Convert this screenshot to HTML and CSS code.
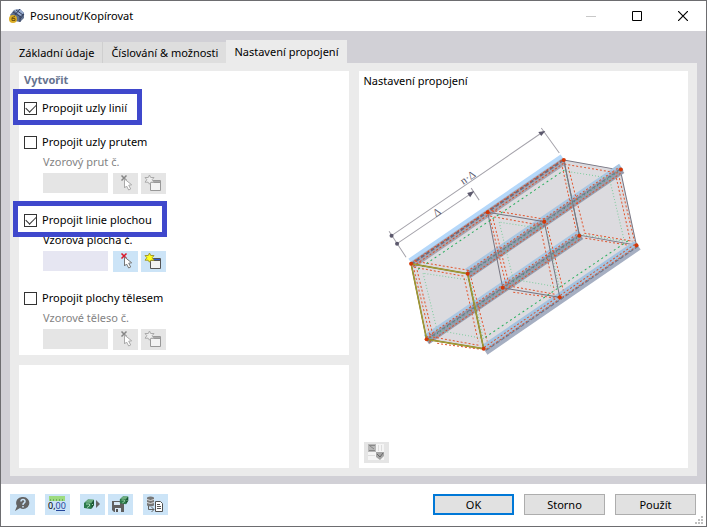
FILE: index.html
```html
<!DOCTYPE html>
<html lang="cs">
<head>
<meta charset="utf-8">
<title>Posunout/Kopírovat</title>
<link rel="stylesheet" href="styles.css">
</head>
<body>
<svg class="defs" aria-hidden="true">
  <defs>
    <symbol id="pick" viewBox="0 0 25 21">
      <path class="pick-x" d="M8.500 2.500l5 5M13.500 2.500l-5 5"/>
      <path class="pick-arrow" d="M11.500 6v9l2-2 2.200 4 2-1-2-3.800 3-.4z"/>
    </symbol>
    <symbol id="create" viewBox="0 0 25 21">
      <path class="win" d="M9.500 7.500h10v10h-10z"/>
      <path class="win-bar" d="M10 8h9v1h-9z"/>
      <path class="win-line" d="M9 9.500h11"/>
      <path class="star" d="M8.500 2l1.200 2.500H13l-1.800 2.200L13 9.200H9.900L8.500 11.200 7.100 9.200H4l1.800-2.500L4 4.500h3.300z"/>
    </symbol>
    <symbol id="block" viewBox="0 0 12 12">
      <path d="M1 5l4-3.500 6 .5v5l-3 4-7-1z" fill="#2c7a4b"/>
      <path d="M2 4.500l3-3h6L8.500 5z" fill="#6fae82"/>
      <path d="M8.500 5L11 2v5l-2.500 4z" fill="#1c5635"/>
      <path d="M3 6h3.500v2L4 9.500M9 6l1 1" stroke="#a5d8b2" fill="none"/>
    </symbol>
  </defs>
</svg>
<div class="window">
  <header class="titlebar">
    <svg class="app-icon" viewBox="0 0 16 16" aria-hidden="true">
      <path d="M1 7l4-5 6-1 4 4v5l-4 4-5-1z" fill="#61718f"/>
      <path d="M5 2l6-1 4 4-4 3z" fill="#98acd0"/>
      <path d="M4 4l8 5M7 2l7 5M11 1l-6 7M11 8v6M15 6l-4 5" stroke="#34405e" fill="none"/>
      <circle cx="4" cy="11" r="4" fill="#dcae27"/>
      <path d="M6 8.500L3 9.500v3h3v-2H3" stroke="#74550c" fill="none"/>
    </svg>
    <h1>Posunout/Kopírovat</h1>
    <button class="caption" aria-label="Minimalizovat" disabled><svg viewBox="0 0 10 10"><path d="M0 5.500h10" stroke="#c8c8c8"/></svg></button>
    <button class="caption" aria-label="Maximalizovat"><svg viewBox="0 0 10 10"><path d="M.5.500h9v9h-9z" stroke="#000" fill="none"/></svg></button>
    <button class="caption" aria-label="Zavřít"><svg viewBox="0 0 10 10"><path d="M0 0l10 10M10 0L0 10" stroke="#000" stroke-width="1.200"/></svg></button>
  </header>
  <main class="body">
    <div class="tabs" role="tablist">
      <button class="tab" role="tab">Základní údaje</button>
      <button class="tab" role="tab">Číslování &amp; možnosti</button>
      <button class="tab active" role="tab" aria-selected="true">Nastavení propojení</button>
    </div>
    <div class="page">
      <section class="panel options">
        <h2>Vytvořit</h2>
        <div class="group single">
          <label class="check marked"><input type="checkbox" checked>Propojit uzly linií</label>
        </div>
        <div class="group">
          <label class="check"><input type="checkbox">Propojit uzly prutem</label>
          <label class="sub off" for="member">Vzorový prut č.</label>
          <div class="field off">
            <input id="member" type="text" disabled>
            <button class="tool" aria-label="Vybrat prut" disabled><svg><use href="#pick"/></svg></button>
            <button class="tool" aria-label="Nový prut" disabled><svg><use href="#create"/></svg></button>
          </div>
        </div>
        <div class="group">
          <label class="check marked"><input type="checkbox" checked>Propojit linie plochou</label>
          <label class="sub" for="surface">Vzorová plocha č.</label>
          <div class="field">
            <input id="surface" type="text">
            <button class="tool" aria-label="Vybrat plochu"><svg><use href="#pick"/></svg></button>
            <button class="tool" aria-label="Nová plocha"><svg><use href="#create"/></svg></button>
          </div>
        </div>
        <div class="group">
          <label class="check"><input type="checkbox">Propojit plochy tělesem</label>
          <label class="sub off" for="solid">Vzorové těleso č.</label>
          <div class="field off">
            <input id="solid" type="text" disabled>
            <button class="tool" aria-label="Vybrat těleso" disabled><svg><use href="#pick"/></svg></button>
            <button class="tool" aria-label="Nové těleso" disabled><svg><use href="#create"/></svg></button>
          </div>
        </div>
      </section>
      <section class="panel blank"></section>
      <section class="panel preview">
        <h2>Nastavení propojení</h2>
        <svg class="diagram" viewBox="359 110 329 250" role="img" aria-label="Nastavení propojení">
          <defs>
            <g id="beam">
              <path d="M-1-2L151-106" stroke="#b5d8fa" stroke-width="6"/>
              <path d="M1 2L153-102" stroke="#a5a5b2" stroke-width="7"/>
              <path d="M0 1L152-103" stroke="#6d6c80" stroke-width="2" stroke-dasharray="4 2"/>
              <path d="M0 0L152-104M2 3L154-101" stroke="#dd4a20" stroke-dasharray="2 2"/>
            </g>
            <g id="beam-soft">
              <path d="M-1-1L153-106" stroke="#a9c6e2" stroke-width="8"/>
              <path d="M0 2L154-103" stroke="#959dae" stroke-width="7"/>
              <path d="M0 0L152-104" stroke="#707487" stroke-dasharray="4 2"/>
              <path d="M-1-2L151-106M2 3L154-101" stroke="#d8522c" stroke-dasharray="2 2"/>
              <path d="M0 1L152-103" stroke="#2f9c72" stroke-dasharray="1 3"/>
            </g>
            <g id="beam-low">
              <path d="M1 2L154-103" stroke="#a6afc2" stroke-width="8"/>
              <path d="M-1-2L151-106" stroke="#a4c3e0" stroke-width="5"/>
              <path d="M0-2L152-106M2 0L154-104" stroke="#d8522c" stroke-dasharray="2 2"/>
              <path d="M2 1L154-103" stroke="#69758c" stroke-dasharray="4 2"/>
            </g>
            <g id="frame-dots" fill="none" stroke-dasharray="2 2">
              <path d="M4-2L57 7M3 4L53 13M18 73L68 82M26 80L70 86" stroke="#e2562f"/>
              <path d="M3 7L19 73M6 7L22 73M53 15L67 78M60 15L76 78" stroke="#e2562f"/>
              <path d="M12 10L26 67 72 75 59 17z" stroke="#7ccb9c" stroke-dasharray="1 2"/>
            </g>
          </defs>
          <path d="M411 263L563 160 620 170 636 245 484 349 427 339z" fill="#dcdbdf"/>
          <g fill="none">
            <use href="#beam-soft" x="427" y="339"/>
            <path d="M563.500 160L620 170 636 245 579 235z" stroke="#777582"/>
            <use href="#beam" x="411" y="263"/>
            <use href="#beam-low" x="484" y="349"/>
            <use href="#beam-soft" x="468" y="273"/>
            <g stroke="#e2562f" stroke-dasharray="2 2">
              <path d="M564 164L618 173M584 233L632 241M585 238L628 245M562 167L576 231M568 167L584 231M616 178L630 241M619 178L634 241"/>
            </g>
            <path d="M565 171L609 178 624 241 579 234M565 171L579 234" stroke="#7ccb9c" stroke-dasharray="1 2"/>
            <use href="#frame-dots" x="487" y="212"/>
            <use href="#frame-dots" x="411" y="263"/>
            <path d="M487.500 212L544 221.500 559.500 297 502.500 287.500z" stroke="#777582"/>
            <path d="M418 269L564 170M485 337L630 239" stroke="#25ae5b" stroke-dasharray="2 3"/>
            <path d="M563.500 160L579 235" stroke="#777582"/>
            <path d="M411 263.500L467.500 273.500 483.500 348.500 426.500 339z" stroke="#77701c" stroke-width="1.500"/>
            <path d="M411 263.500L467.500 273.500 483.500 348.500 426.500 339z" stroke="#aaa137"/>
            <path d="M391.500 235.500L544 131M397 243.500L473 192M389 231L406 257M541 128L559 153M471 188L479 200" stroke="#a5a3ab"/>
          </g>
          <path d="M545 131l-7 1 3 4zM474 191l-7 2 3 4z" fill="#5c596d"/>
          <circle cx="391.500" cy="235.500" r="2" fill="#5c596d"/><circle cx="397" cy="243.500" r="2" fill="#5c596d"/>
          <g fill="#d43706">
            <circle cx="411" cy="263.500" r="2"/><circle cx="467.500" cy="273.500" r="2"/><circle cx="483.500" cy="348.500" r="2"/><circle cx="426.500" cy="339" r="2"/>
            <circle cx="487.500" cy="212" r="2"/><circle cx="544" cy="221.500" r="2"/><circle cx="559.500" cy="297" r="2"/><circle cx="502.500" cy="287.500" r="2"/>
            <circle cx="563.500" cy="160" r="2"/><circle cx="620.500" cy="169.500" r="2"/><circle cx="636" cy="245" r="2"/><circle cx="579" cy="235.500" r="2"/>
          </g>
          <text transform="translate(463 185) rotate(-34)">n·Δ</text>
          <text transform="translate(436 217) rotate(-34)">Δ</text>
        </svg>
        <button class="tool view" aria-label="Přepnout obrázek" disabled>
          <svg viewBox="0 0 25 21"><path d="M4 2h16v16H4z" fill="#f5f5f5"/><path d="M4 2h8v8H4z" fill="#b7b7b7"/><path d="M5 3.500h6M5 8.500h6M6 4l4 3" stroke="#888" fill="none"/><path d="M12 10h8v4l-4 4-4-3z" fill="#a5a5a5"/><path d="M13 12l3 3 3-4" stroke="#666" fill="none"/><path d="M14.500 3v6M17.500 3v6M4 13.500h7" stroke="#ddd"/></svg>
        </button>
      </section>
    </div>
  </main>
  <footer class="footer">
    <div class="tools">
      <button class="tool" aria-label="Nápověda"><svg viewBox="0 0 25 21"><path d="M13 3a6 6 0 1 1-3 11l-5 3 2-5a6 6 0 0 1 6-9z" fill="#646464"/><path d="M11 7.500q0-2 2-2t2 2q0 1-1 1.500t-1 2M13 12v1.500" stroke="#cce4f7" stroke-width="1.500" fill="none"/></svg></button>
      <button class="tool" aria-label="Jednotky"><svg viewBox="0 0 25 21"><path d="M4 2h16v5H4z" fill="#9ddb80"/><path d="M5.500 5v2M8.500 5v2M11.500 5v2M14.500 5v2M17.500 5v2" stroke="#6fae5b"/><text class="num" x="3" y="15">0,<tspan fill="#24479b">00</tspan></text><path d="M11 16.500h9" stroke="#24479b"/></svg></button>
      <button class="tool" aria-label="Výchozí"><svg viewBox="0 0 25 21"><use href="#block" x="3" y="4" width="12" height="12"/><path d="M16 6l4 4-4 4z" fill="#666"/></svg></button>
      <button class="tool near" aria-label="Uložit výchozí"><svg viewBox="0 0 25 21"><path d="M4 7h12v11H6l-2-2z" fill="#606060"/><path d="M6 8h6v3H6zM7 14h6v4H7z" fill="#d8e9f6"/><path d="M8 15h2v3H8z" fill="#555"/><use href="#block" x="11" y="1" width="10" height="10"/></svg></button>
      <button class="tool" aria-label="Převzít údaje"><svg viewBox="0 0 25 21"><path d="M4 3.500q3.500-2 7 0v8q-3.500 2-7 0z" fill="#777"/><path d="M4 5.500q3.500 2 7 0M4 8.500q3.500 2 7 0" stroke="#ddd" fill="none"/><path d="M5.500 12v3.500H11M8.500 13l2.500 2.500L8.500 18" stroke="#606060" fill="none"/><path d="M12.500 7.500h5l2 2v8h-7z" fill="#fff" stroke="#505050"/><path d="M14 10.500h3M14 12.500h4M14 14.500h4" stroke="#555"/></svg></button>
    </div>
    <div class="actions">
      <button class="action primary">OK</button>
      <button class="action">Storno</button>
      <button class="action">Použít</button>
    </div>
    <svg class="grip" viewBox="0 0 8 8" aria-hidden="true"><path d="M6 0h2v2H6zM3 3h2v2H3zM6 3h2v2H6zM0 6h2v2H0zM3 6h2v2H3zM6 6h2v2H6z" fill="#bfbfbf"/></svg>
  </footer>
</div>
</body>
</html>
```
FILE: styles.css
```css
* { box-sizing: border-box; }
body {
  --x: #dd1728; --arrow: #777; --win: #555; --paper: #f3f3f3; --bar: #315bd1; --star: #ffff20; --star-edge: #a29a2e;
  margin: 0; font: 11px/20px "Noto Sans", "Open Sans", sans-serif; color: #000;
}
h1, h2 { margin: 0; font-size: inherit; font-weight: 400; }
button, input { margin: 0; font: inherit; color: inherit; }
button { padding: 0; border: 0; background: none; }
svg { display: block; }
.defs { position: absolute; width: 0; height: 0; }

.window { display: flex; flex-direction: column; min-height: 100vh; border: 1px solid #6d6d70; background: #fff; }
.titlebar { display: flex; align-items: center; height: 30px; padding-left: 8px; }
.titlebar h1 { flex: 1; padding-left: 5px; }
.app-icon { width: 16px; height: 16px; }
.caption { width: 46px; height: 28px; display: grid; place-items: center; }
.caption svg { width: 10px; height: 10px; }

.body { flex: 1; display: flex; flex-direction: column; padding: 9px 9px 8px; background: #d1d0d6; }
.tabs { display: flex; align-items: flex-end; }
.tab { height: 21px; padding: 0 8px 0 9px; background: #dedede; }
.tab + .tab { padding-left: 8px; border-left: 1px solid #cfcfcf; }
.tab.active { height: 23px; border-left: 0; line-height: 23px; background: #ebebeb; }
.page { flex: 1; display: grid; grid-template: auto 1fr / 1fr 1fr; gap: 10px; padding: 8px 9px; background: #ebebeb; }
.panel { background: #fff; padding: 0 5px; }
.options { padding-bottom: 5px; }
.options h2 { height: 27px; line-height: 18px; font-weight: 700; color: #66738f; }
.preview { grid-area: 1 / 2 / 3 / 3; display: flex; flex-direction: column; padding-bottom: 5px; }

.group { display: flex; flex-direction: column; align-items: flex-start; margin-bottom: 16px; }
.group.single { margin-bottom: 14px; }
.group:last-child { margin-bottom: 0; }
.check { display: flex; align-items: center; gap: 5px; }
.check input { appearance: none; display: grid; width: 13px; height: 13px; border: 1px solid #333; background: #fff; }
.check input:checked::before { content: ""; width: 9px; height: 5px; margin: 1px; border: solid #333; border-width: 0 0 1px 1px; transform: rotate(-45deg); }
.marked { position: relative; z-index: 1; }
.marked::before { content: ""; position: absolute; z-index: -1; inset: -9px -15px -7px -11px; border: 5px solid #3f48cc; background: #fff; }
.sub { margin-left: 19px; }
.sub.off { color: #838383; }
.field { display: flex; gap: 3px; margin: 1px 0 0 19px; }
.field input { width: 65px; height: 20px; margin-right: 2px; padding: 0 4px; border: 0; background: #e6e6f2; }
.field.off input { background: #e5e5e5; }

.tool { width: 25px; height: 21px; background: #cce4f7; }
.tool svg { width: 25px; height: 21px; }
.tool:disabled { background: #e5e5e5; }
.field.off { --x: #858585; --arrow: #aaa; --win: #989898; --bar: #aaa; --star: #eee; --star-edge: #aaa; }
.pick-x { stroke: var(--x); stroke-width: 1.500; fill: none; }
.pick-arrow { fill: #fff; stroke: var(--arrow); }
.win { fill: var(--paper); stroke: var(--win); }
.win-bar { fill: var(--bar); }
.win-line { stroke: var(--win); }
.star { fill: var(--star); stroke: var(--star-edge); }

.diagram { width: calc(100% + 10px); margin: 19px -5px 0; }
.diagram text { font: 11px "Liberation Serif", serif; fill: #5c596d; }
.view { margin-top: auto; }

.footer { position: relative; display: flex; align-items: center; justify-content: space-between; height: 42px; padding: 0 10px 1px 9px; }
.tools { display: flex; gap: 10px; }
.tools .near { margin-left: -7px; }
.num { font: 9px "Noto Sans", sans-serif; }
.actions { display: flex; gap: 10px; }
.action { width: 81px; height: 21px; line-height: 17px; border: 1px solid #adadad; background: #e1e1e1; }
.action.primary { border: 2px solid #0078d7; }
.grip { position: absolute; right: 3px; bottom: 2px; width: 8px; height: 8px; }
```
